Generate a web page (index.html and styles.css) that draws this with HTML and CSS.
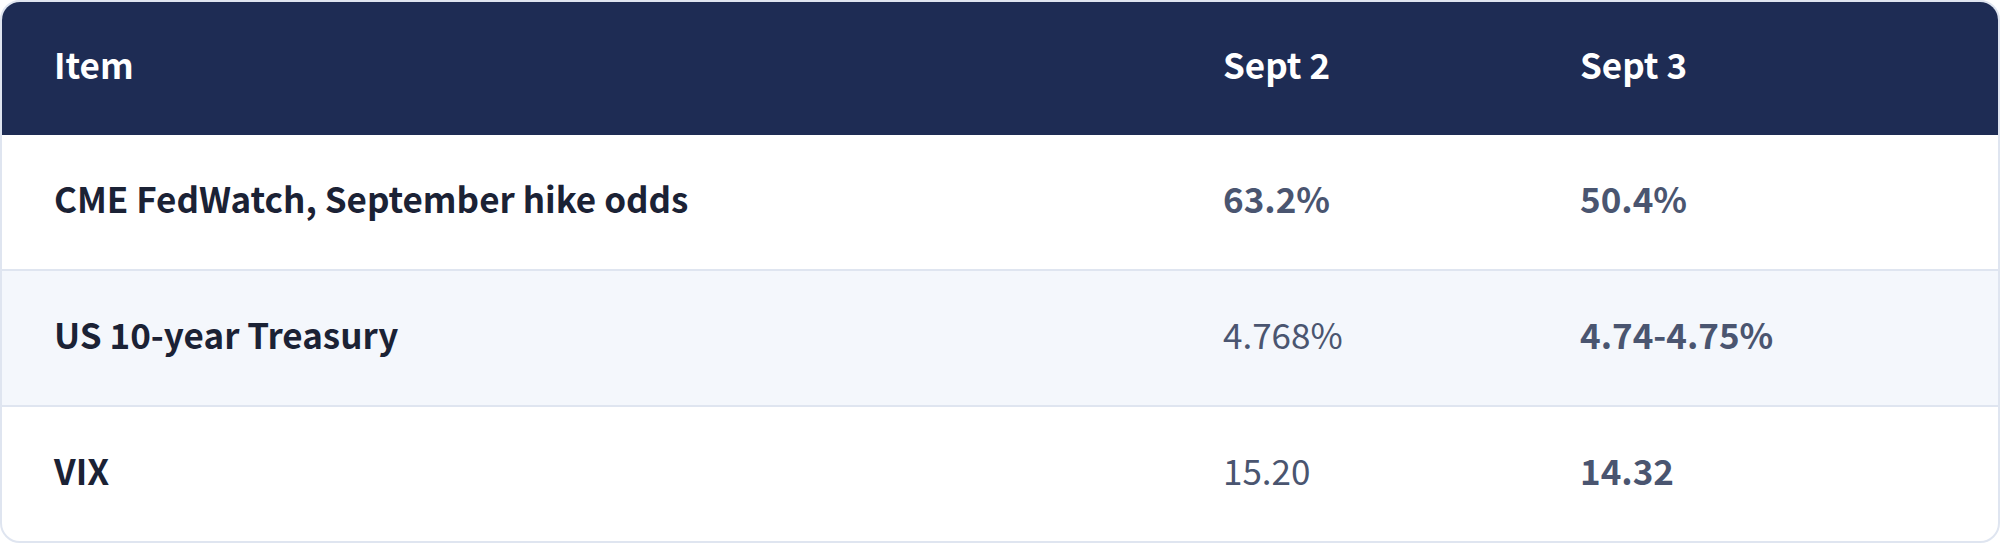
FILE: index.html
```html
<!DOCTYPE html>
<html lang="en">
<head>
<meta charset="utf-8">
<title>Market table</title>
<link rel="stylesheet" href="styles.css">
</head>
<body>
<div class="card">
  <div class="row head">
    <div class="cell">Item</div>
    <div class="cell">Sept 2</div>
    <div class="cell">Sept 3</div>
  </div>
  <div class="row">
    <div class="cell label">CME FedWatch, September hike odds</div>
    <div class="cell num strong">63.2%</div>
    <div class="cell num strong">50.4%</div>
  </div>
  <div class="row alt">
    <div class="cell label">US 10-year Treasury</div>
    <div class="cell num">4.768%</div>
    <div class="cell num strong">4.74-4.75%</div>
  </div>
  <div class="row last">
    <div class="cell label">VIX</div>
    <div class="cell num">15.20</div>
    <div class="cell num strong">14.32</div>
  </div>
</div>
</body>
</html>
```

FILE: styles.css
```css
html, body {
  margin: 0;
  padding: 0;
  background: #ffffff;
}
body {
  font-family: "Noto Sans CJK KR", "Noto Sans", sans-serif;
}
.card {
  width: 2000px;
  box-sizing: border-box;
  border: 2px solid #dfe5f0;
  border-radius: 20px;
  overflow: hidden;
  background: #ffffff;
}
.row {
  display: grid;
  grid-template-columns: 1169px 357px 1fr;
  align-items: center;
  height: 134px;
  border-bottom: 2px solid #dfe5f0;
}
.row.head {
  height: 133px;
  background: #1e2c54;
  border-bottom: none;
  color: #ffffff;
  font-weight: 700;
}
.row.alt {
  background: #f4f7fc;
}
.row.last {
  border-bottom: none;
}
.cell {
  padding-left: 52px;
  padding-bottom: 10px;
  font-size: 35px;
  line-height: 1;
}
.label {
  color: #1b2235;
  font-weight: 700;
}
.num {
  color: #4a5570;
  font-weight: 400;
}
.num.strong {
  font-weight: 700;
}
```
